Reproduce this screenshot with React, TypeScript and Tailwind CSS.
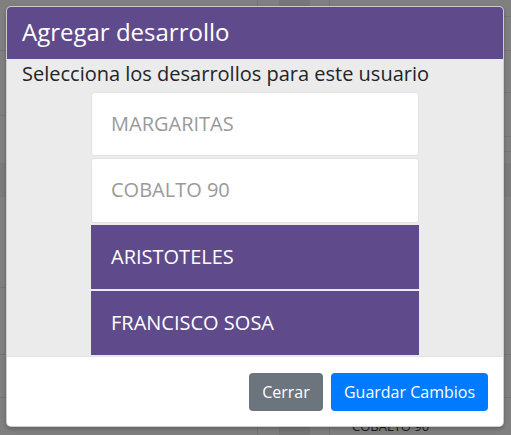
import React from 'react';

const rows = [
  { h: 17, left: false, right: true },
  { h: 34, left: true, right: true },
  { h: 42, left: false, right: true },
  { h: 23, left: true, right: false },
  { h: 21, left: false, right: true },
  { h: 15, left: false, right: true },
  { h: 11, left: false, right: false },
  { h: 34, left: false, right: false, band: true },
  { h: 91, left: true, right: false },
  { h: 67, left: true, right: true },
  { h: 43, left: true, right: true },
  { h: 37, left: false, right: false, last: true },
];

const items = [
  { name: 'MARGARITAS', active: false },
  { name: 'COBALTO 90', active: false },
  { name: 'ARISTOTELES', active: true },
  { name: 'FRANCISCO SOSA', active: true },
  { name: 'ALTAVISTA', active: false },
];

function Backdrop() {
  return (
    <div className="grid grid-cols-[258px_22px_30px_20px_1fr] w-full h-full">
      {rows.map((r, i) => (
        <React.Fragment key={i}>
          <div className={`border-r border-[#767676] ${r.band ? 'bg-[#7b7b7b]' : ''} ${r.left ? 'border-b' : ''}`} style={{ height: r.h }} />
          <div className={`border-r border-[#767676] ${r.band ? 'bg-[#7b7b7b]' : ''}`} style={{ height: r.h }} />
          <div className="bg-[#777777]" style={{ height: r.h }} />
          <div className={`border-r border-[#767676] ${r.band ? 'bg-[#7b7b7b]' : ''}`} style={{ height: r.h }} />
          <div className={`border-[#767676] ${r.band ? 'bg-[#7b7b7b]' : ''} ${r.right ? 'border-b' : ''}`} style={{ height: r.h }}>
            {r.last && (
              <div className="pl-[22px] pt-[22px] text-[13px] leading-none text-[#1c1c1c]">COBALTO 90</div>
            )}
          </div>
        </React.Fragment>
      ))}
    </div>
  );
}

export default function App() {
  return (
    <div className="relative w-[511px] h-[435px] overflow-hidden bg-[#808080] font-['Open_Sans',sans-serif]">
      <Backdrop />

      {/* modal */}
      <div className="absolute left-[6px] top-[6px] w-[498px] h-[421px] flex flex-col overflow-hidden rounded-[5px] border border-black/20 bg-white shadow-[0_2px_4px_rgba(0,0,0,0.25)]">
        <div className="h-[52px] shrink-0 bg-[#5f4b8b] px-[15px] flex items-center">
          <h5 className="text-[24px] leading-none text-white pb-[2px]">Agregar desarrollo</h5>
        </div>

        <div className="h-[297px] shrink-0 overflow-hidden bg-[#ebebeb]">
          <p className="px-[15px] pt-[1px] text-[20px] leading-[27px] text-[#212529]">
            Selecciona los desarrollos para este usuario
          </p>
          <div className="mx-auto mt-[5px] w-[328px] flex flex-col gap-[2px]">
            {items.map((it) => (
              <div
                key={it.name}
                className={`h-[64.3px] shrink-0 flex items-center text-[20px] uppercase ${
                  it.active
                    ? 'bg-[#5f4b8b] text-white px-[20px]'
                    : 'bg-white text-[#9a9a9a] rounded-[3px] border border-[#e2e2e2] px-[19px]'
                }`}
              >
                {it.name}
              </div>
            ))}
          </div>
        </div>

        <div className="flex-1 border-t border-[#e4e4e4] flex items-center justify-end gap-[8px] px-[15px]">
          <button className="w-[74px] h-[38px] rounded-[4px] bg-[#6c757d] text-white text-[16px]">Cerrar</button>
          <button className="w-[157px] h-[38px] rounded-[4px] bg-[#007bff] text-white text-[16px]">Guardar Cambios</button>
        </div>
      </div>
    </div>
  );
}
